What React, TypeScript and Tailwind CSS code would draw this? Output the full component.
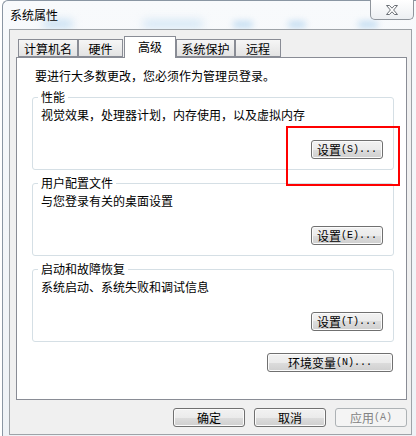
import React from "react";

const TABS = [
    { label: "计算机名", w: "w-[60px]" },
    { label: "硬件", w: "w-[45px]" },
    { label: "高级", w: "w-[52px]", active: true },
    { label: "系统保护", w: "w-[59px]" },
    { label: "远程", w: "w-[46px]" }
];

const GROUPS = [
    { title: "性能", desc: "视觉效果，处理器计划，内存使用，以及虚拟内存", key: "S" },
    { title: "用户配置文件", desc: "与您登录有关的桌面设置", key: "E" },
    { title: "启动和故障恢复", desc: "系统启动、系统失败和调试信息", key: "T" }
];

function Button({ label, hotkey, dots, w, disabled }: { label: string; hotkey?: string; dots?: boolean; w: string; disabled?: boolean }) {
    return (
        <button
            className={`${w} h-[19px] rounded-[3px] border flex items-center justify-center text-[12px] leading-[12px] ${
                disabled
                    ? "border-[#adb2b5] bg-[#f4f4f4] text-[#838383]"
                    : "border-[#707070] bg-[linear-gradient(#f2f2f2,#ebebeb_50%,#dddddd_50%,#cfcfcf)] shadow-[inset_0_0_0_1px_#fbfbfb] text-black"
            }`}
        >
            <span>{label}</span>
            {hotkey && (
                <span className="font-['Liberation_Mono',monospace] text-[10px]">
                    ({hotkey}){dots ? "..." : ""}
                </span>
            )}
        </button>
    );
}

function CloseGlyph() {
    return (
        <svg width="12" height="10" viewBox="0 0 12 10">
            <polygon
                points="0.5,0.5 3.5,0.5 6,3.2 8.5,0.5 11.5,0.5 7.6,5 11.5,9.5 8.5,9.5 6,6.8 3.5,9.5 0.5,9.5 4.4,5"
                fill="#ffffff"
                stroke="#6a6f75"
                strokeWidth="1"
                strokeLinejoin="round"
            />
        </svg>
    );
}

export default function App() {
    return (
        <div className="relative w-[416px] h-[436px] overflow-hidden bg-white pl-[2px] font-['Noto_Sans_CJK_SC','Liberation_Sans',sans-serif] text-black">
            <div className="relative h-[440px] border-l border-t border-[#8a96a3] rounded-tl-[6px] bg-[linear-gradient(#f8fafc,#eef2f6)]">
                {/* Glass glow */}
                <div className="absolute top-[19px] left-[40px] w-[30px] h-[8px] bg-[#c5def2] rounded-full blur-[4px]" />
                <div className="absolute top-[19px] left-[140px] w-[60px] h-[8px] bg-[#d3e6f5] rounded-full blur-[4px]" />
                <div className="absolute top-[20px] left-[230px] w-[20px] h-[7px] bg-[#c5def2] rounded-full blur-[3px]" />
                <div className="absolute top-[20px] left-[285px] w-[18px] h-[7px] bg-[#c5def2] rounded-full blur-[3px]" />
                <div className="absolute top-[20px] left-[355px] w-[20px] h-[7px] bg-[#c5def2] rounded-full blur-[3px]" />

                {/* Title bar */}
                <div className="relative flex justify-between h-[28px]">
                    <span className="pl-[7px] pt-[8px] text-[12px] leading-[12px]">系统属性</span>
                    <div className="mr-[2px] -mt-[1px] w-[44px] h-[20px] border border-t-0 border-[#8f959c] rounded-b-[5px] bg-[linear-gradient(#ffffff,#eceff2)] flex items-center justify-center">
                        <CloseGlyph />
                    </div>
                </div>

                {/* Dialog body */}
                <div className="relative ml-[6px] w-[403px] h-[406px] border border-[#9ea3a8] bg-[#f0f0f0] pl-[6px] pt-[6px]">
                    <div className="flex items-end h-[21px] pl-[2px] relative z-10">
                        {TABS.map((t) =>
                            t.active ? (
                                <div
                                    key={t.label}
                                    className={`${t.w} ml-[1px] h-[22px] -mb-[1px] border border-b-0 border-[#898c95] bg-white flex justify-center pt-[4px] text-[12px] leading-[12px]`}
                                >
                                    {t.label}
                                </div>
                            ) : (
                                <div
                                    key={t.label}
                                    className={`${t.w} h-[18px] border border-[#898c95] bg-[linear-gradient(#f6f6f6,#e3e3e3)] flex justify-center pt-[3px] text-[12px] leading-[12px]`}
                                >
                                    {t.label}
                                </div>
                            )
                        )}
                    </div>

                    <div className="w-[391px] h-[343px] border border-[#898c95] bg-white pl-[15px] pt-[12px] flex flex-col">
                        <p className="ml-[3px] text-[12px] leading-[12px]">要进行大多数更改，您必须作为管理员登录。</p>

                        {GROUPS.map((g, i) => (
                            <fieldset
                                key={g.title}
                                className={`${i === 0 ? "mt-[9px]" : "mt-[7px]"} w-[362px] border border-[#d5dfe5] rounded-[3px] pl-[8px] pr-[10px] pb-[10px] text-[12px] leading-[12px]`}
                            >
                                <legend className="-ml-[3px] px-[3px] leading-[12px]">{g.title}</legend>
                                <p className="mt-[6px] leading-[12px]">{g.desc}</p>
                                <div className="flex justify-end mt-[19px]">
                                    <Button label="设置" hotkey={g.key} dots w="w-[72px]" />
                                </div>
                            </fieldset>
                        ))}

                        <div className="flex justify-end mt-[11px] mr-[13px]">
                            <Button label="环境变量" hotkey="N" dots w="w-[126px]" />
                        </div>
                    </div>

                    <div className="flex justify-end gap-[9px] w-[391px] mt-[8px]">
                        <Button label="确定" w="w-[72px]" />
                        <Button label="取消" w="w-[72px]" />
                        <Button label="应用" hotkey="A" w="w-[72px]" disabled />
                    </div>
                </div>
            </div>

            {/* Highlight annotation */}
            <div className="absolute left-[286px] top-[126px] w-[114px] h-[60px] border-2 border-[#ff0000]" />
        </div>
    );
}
